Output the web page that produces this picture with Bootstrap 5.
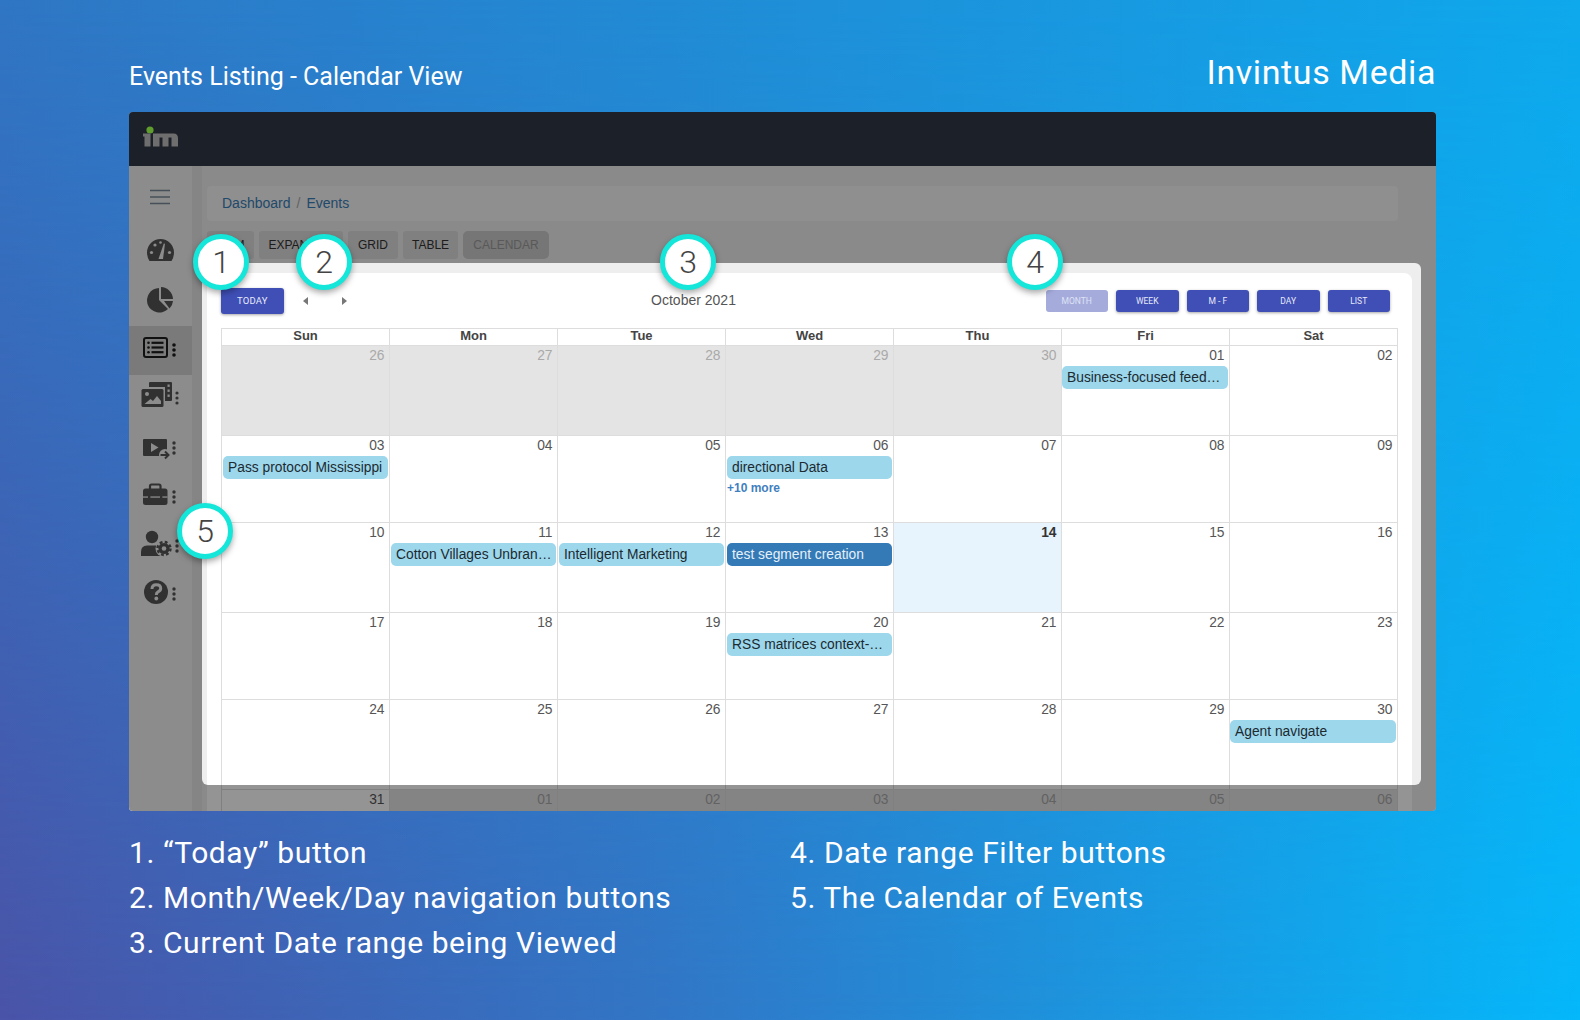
<!DOCTYPE html>
<html lang="en">
<head>
<meta charset="utf-8">
<title>Events Listing - Calendar View</title>
<link rel="stylesheet" href="https://cdn.jsdelivr.net/npm/bootstrap@5.3.0/dist/css/bootstrap.min.css">
<style>
html,body{height:100%;}
body{position:relative;width:1580px;height:1020px;overflow:hidden;background:linear-gradient(to right,#4a54a8,#3276c6 42%,#05b8fa);font-family:Roboto,sans-serif;color:#fff;}
body::before{content:"";position:absolute;inset:0;background:linear-gradient(to right,#2f76c4,#0ea8ec);-webkit-mask-image:linear-gradient(to bottom,#000,transparent);mask-image:linear-gradient(to bottom,#000,transparent);}
.page-wrap{position:relative;padding:0 144px 0 129px;}
.page-head{height:112px;padding-bottom:20px;}
.page-sub{font-size:25px;line-height:30px;}
.page-brand{font-size:34px;line-height:40px;letter-spacing:.6px;}
.app-win{position:relative;height:699px;width:1307px;overflow:hidden;border-radius:4px;background:#eee;font-family:"Liberation Sans",Arial,sans-serif;}
.app-top{position:relative;z-index:3;height:54px;background:#1c2029;padding:12px 0 0 13px;}
.app-body{height:645px;}
.side-bar{width:63px;flex:none;background:#f1f1f1;}
.side-burger{height:62px;padding:23px 0 0 21px;}
.side-item{display:block;height:49px;padding-left:12px;}
.side-item.is-on{background:#d2d2d2;}
.side-item svg,.side-burger svg,.app-top svg{display:block;}
.main-col{flex:1;min-width:0;border-left:10px solid #e6e6e6;padding:20px 24px 0 5px;}
.crumbs{height:35px;margin:0 14px 10px 0;padding:8px 15px;background:#f6f6f6;border-radius:4px;font-size:14px;line-height:19px;--bs-breadcrumb-item-padding-x:6px;}
.crumbs a{color:#3a7eb8;text-decoration:none;}
.crumbs .breadcrumb-item+.breadcrumb-item::before{color:#aaa;}
.tab-row{height:28px;margin-bottom:14px;gap:5px;}
.tab-btn{height:28px;padding:0 8px;border:0;border-radius:3px;background:#dcdcdc;color:#333;font-size:12px;line-height:28px;}
.tab-btn.is-off{background:#cbcbcb;color:#9a9a9a;border-radius:5px;}
.tab-a{width:47px;}.tab-b{width:84px;}.tab-c{width:50px;}.tab-d{width:55px;}.tab-e{width:86px;}
.cal-panel{background:#fff;border-radius:8px 8px 0 0;padding:15px 13px 0 14px;height:600px;}
.cal-tools{height:26px;margin-bottom:14px;position:relative;}
.cal-btn{font-family:Roboto,sans-serif;width:62.500px;height:22px;padding:0;border:0;border-radius:3px;background:#3f4fb6;color:#e8eaf8;font-size:8.500px;line-height:22px;box-shadow:0 1px 3px rgba(0,0,0,.35);}
.cal-btn.is-today{height:26px;line-height:26px;font-size:9.500px;letter-spacing:.2px;}
.cal-btn.is-dim{background:#a5acdc;color:#dfe2f5;box-shadow:none;}
.cal-group{gap:8px;margin-right:9px;}
.nav-arrows{gap:34px;margin-left:19px;margin-right:auto;}
.cal-title{position:absolute;left:0;right:0;top:4px;text-align:center;font-size:14px;line-height:17px;color:#555;padding-right:233px;}
.arrow-l,.arrow-r{display:block;width:0;height:0;border-top:4.500px solid transparent;border-bottom:4.500px solid transparent;}
.arrow-l{border-right:5px solid #777;}
.arrow-r{border-left:5px solid #777;}
.cal-grid{table-layout:fixed;width:1177px;border-collapse:collapse;color:#555;font-size:13.800px;}
.cal-grid th,.cal-grid td{border:1px solid #ddd;padding:0;vertical-align:top;}
.cal-grid th{height:17px;line-height:14px;text-align:center;font-size:13px;font-weight:700;color:#444;}
.cal-grid tbody tr{height:90px;}
.cal-grid tbody tr:nth-child(even){height:87px;}
.cal-num{text-align:right;padding:1px 4.500px 0 0;line-height:17px;height:20px;}
.is-other{background:#e4e4e4;}
.is-other .cal-num{color:#a9a9a9;}
.is-today-cell{background:#e8f4fd;}
.is-today-cell .cal-num{font-weight:700;color:#333;}
.cal-ev{margin:0 1px;height:23px;line-height:23px;padding:0 4px 0 5px;border-radius:5px;background:#9cd7ec;color:#1d2a30;}
.cal-ev.is-flush{margin-left:0;}
.cal-ev.is-sel{background:#337ab7;color:#e6f0f8;}
.cal-more{display:block;margin:2px 0 0 1px;font-size:12px;line-height:14px;font-weight:700;color:#3f80c0;text-decoration:none;}
.spot{position:absolute;z-index:2;left:73px;top:151px;width:1219px;height:522px;border-radius:6px;box-shadow:0 0 0 2000px rgba(0,0,0,.42);pointer-events:none;}
.callout{position:absolute;z-index:4;width:56px;height:56px;border:5px solid #14e6d9;border-radius:50%;background:#fff;color:#444;font-family:Roboto,sans-serif;font-weight:300;font-size:32px;line-height:46px;text-align:center;box-shadow:0 3px 6px rgba(0,0,0,.35);}
.c-1{left:64px;top:122px;}.c-2{left:167px;top:122px;}.c-3{left:531px;top:122px;}.c-4{left:878px;top:122px;}.c-5{left:48px;top:391px;}
.note-row{padding-top:19px;}
.note-col-a{width:661px;}
.note-list{font-size:30px;line-height:45px;letter-spacing:.58px;margin:0;}
</style>
</head>
<body>
<div class="page-wrap">
  <header class="page-head d-flex justify-content-between align-items-end">
    <div class="page-sub">Events Listing - Calendar View</div>
    <div class="page-brand">Invintus Media</div>
  </header>

  <div class="app-win">
    <div class="app-top">
      <svg width="38" height="26" viewBox="0 0 38 26" aria-label="im logo"><circle cx="8" cy="6" r="3.600" fill="#5f9e2c"/><g fill="#6e6e6e"><path d="M1 9.500h7.500v13H2.500V12.500H1z"/><path d="M11 9.500h20.500c3 0 4.500 2 4.500 4.500v8.500h-6.500V13.500h-3v9h-6v-9h-3v9H11z"/></g></svg>
    </div>
    <div class="app-body d-flex">
      <nav class="side-bar">
        <div class="side-burger"><svg width="20" height="16" viewBox="0 0 20 16"><path d="M0 1.500h20M0 8h20M0 14.500h20" stroke="#7b8b99" stroke-width="1.400"/></svg></div>
        <a class="side-item"><svg width="48" height="49" viewBox="0 0 48 49"><path fill="#555" d="M8.500 33Q6 29 6 24.500A13.500 13.500 0 0 1 33 24.500Q33 29 30.500 33Z"/><g fill="#f1f1f1"><circle cx="10.500" cy="24.500" r="1.600"/><circle cx="14" cy="17" r="1.600"/><circle cx="19.500" cy="14.500" r="1.300"/><circle cx="28.500" cy="24.500" r="1.600"/><path d="M17.500 31L22.800 15.500 24 15.800 22 31Z"/></g></svg></a>
        <a class="side-item"><svg width="48" height="49" viewBox="0 0 48 49"><g fill="#555"><path d="M18 11A12.300 12.300 0 1 0 27 32L18 23Z"/><path d="M20 10A12.500 12.500 0 0 1 32 22H20Z"/><path d="M23 24H32A12 12 0 0 1 28.500 31.500Z"/></g></svg></a>
        <a class="side-item is-on"><svg width="48" height="49" viewBox="0 0 48 49"><rect x="3" y="12" width="23" height="19" rx="2" fill="none" stroke="#1c1c1c" stroke-width="2"/><g fill="#1c1c1c"><circle cx="7.500" cy="16.800" r="1.300"/><circle cx="7.500" cy="21.500" r="1.300"/><circle cx="7.500" cy="26.200" r="1.300"/><rect x="10.500" y="15.700" width="12" height="2.200"/><rect x="10.500" y="20.400" width="12" height="2.200"/><rect x="10.500" y="25.100" width="12" height="2.200"/><circle cx="33" cy="19" r="1.800"/><circle cx="33" cy="24" r="1.800"/><circle cx="33" cy="29" r="1.800"/></g></svg></a>
        <a class="side-item"><svg width="48" height="49" viewBox="0 0 48 49"><g fill="#555"><path d="M8 8a1 1 0 0 1 1-1H30a1 1 0 0 1 1 1V25a1 1 0 0 1-1 1H24V12H8Z"/><rect x="0.500" y="14" width="22" height="18" rx="1.500"/><circle cx="36" cy="18" r="1.600"/><circle cx="36" cy="23" r="1.600"/><circle cx="36" cy="28" r="1.600"/></g><g fill="#f1f1f1"><rect x="26.500" y="9.500" width="2.200" height="2.400"/><rect x="26.500" y="14.500" width="2.200" height="2.400"/><rect x="26.500" y="19.500" width="2.200" height="2.400"/><circle cx="6" cy="19" r="2"/><path d="M3.500 29L9.500 24 12 26 16 21 20 26V29Z"/></g></svg></a>
        <a class="side-item"><svg width="48" height="49" viewBox="0 0 48 49"><g fill="#555"><rect x="2" y="15" width="24" height="17" rx="1"/><circle cx="33" cy="19" r="1.700"/><circle cx="33" cy="24" r="1.700"/><circle cx="33" cy="29" r="1.700"/></g><path fill="#f1f1f1" d="M10 19V28L17.500 23.500Z"/><circle cx="24" cy="31" r="6" fill="#f1f1f1"/><path d="M19.500 31H27M24 27.500L27.500 31 24 34.500" fill="none" stroke="#555" stroke-width="2"/></svg></a>
        <a class="side-item"><svg width="48" height="49" viewBox="0 0 48 49"><path d="M9 17V13a1.500 1.500 0 0 1 1.500-1.500h7.500a1.500 1.500 0 0 1 1.500 1.500V17" fill="none" stroke="#555" stroke-width="2.200"/><g fill="#555"><rect x="2" y="15.500" width="24.500" height="16.500" rx="2.500"/><circle cx="33" cy="19" r="1.700"/><circle cx="33" cy="24" r="1.700"/><circle cx="33" cy="29" r="1.700"/></g><rect x="2" y="23.400" width="24.500" height="1.300" fill="#f1f1f1"/><rect x="7" y="22" width="2.400" height="4" fill="#555"/><rect x="19" y="22" width="2.400" height="4" fill="#555"/></svg></a>
        <a class="side-item"><svg width="48" height="49" viewBox="0 0 48 49"><g fill="#555"><circle cx="11" cy="15" r="6.200"/><path d="M0 34V30Q0 23.500 6 23.500H15Q18 23.500 19 25V34Z"/></g><circle cx="23" cy="26.500" r="8.500" fill="#f1f1f1"/><circle cx="23" cy="26.500" r="5.600" fill="#555"/><circle cx="23" cy="26.500" r="6.500" fill="none" stroke="#555" stroke-width="2.400" stroke-dasharray="2.800 2.300"/><circle cx="23" cy="26.500" r="2.300" fill="#f1f1f1"/><g fill="#555"><circle cx="36" cy="19" r="1.700"/><circle cx="36" cy="24" r="1.700"/><circle cx="36" cy="29" r="1.700"/></g></svg></a>
        <a class="side-item"><svg width="48" height="49" viewBox="0 0 48 49"><circle cx="15" cy="21" r="12" fill="#555"/><path d="M11 18Q11 13.800 15.300 13.800Q19.700 13.800 19.700 17.500Q19.700 19.500 17 20.800Q15.300 21.600 15.300 24" fill="none" stroke="#f1f1f1" stroke-width="3"/><circle cx="15.300" cy="27.500" r="1.900" fill="#f1f1f1"/><g fill="#555"><circle cx="33" cy="18" r="1.700"/><circle cx="33" cy="23" r="1.700"/><circle cx="33" cy="28" r="1.700"/></g></svg></a>
      </nav>

      <main class="main-col">
        <ol class="breadcrumb crumbs">
          <li class="breadcrumb-item"><a href="#">Dashboard</a></li>
          <li class="breadcrumb-item"><a href="#">Events</a></li>
        </ol>
        <div class="tab-row d-flex">
          <button class="btn tab-btn tab-a" type="button">SLIM</button>
          <button class="btn tab-btn tab-b" type="button">EXPANDED</button>
          <button class="btn tab-btn tab-c" type="button">GRID</button>
          <button class="btn tab-btn tab-d" type="button">TABLE</button>
          <button class="btn tab-btn tab-e is-off" type="button">CALENDAR</button>
        </div>
        <section class="cal-panel">
          <div class="cal-tools d-flex align-items-center">
            <div class="cal-title">October 2021</div>
            <button class="btn cal-btn is-today" type="button">TODAY</button>
            <div class="nav-arrows d-flex"><span class="arrow-l"></span><span class="arrow-r"></span></div>
            <div class="cal-group d-flex">
              <button class="btn cal-btn is-dim" type="button">MONTH</button>
              <button class="btn cal-btn" type="button">WEEK</button>
              <button class="btn cal-btn" type="button">M - F</button>
              <button class="btn cal-btn" type="button">DAY</button>
              <button class="btn cal-btn" type="button">LIST</button>
            </div>
          </div>
          <table class="cal-grid">
            <thead><tr><th>Sun</th><th>Mon</th><th>Tue</th><th>Wed</th><th>Thu</th><th>Fri</th><th>Sat</th></tr></thead>
            <tbody>
              <tr>
                <td class="is-other"><div class="cal-num">26</div></td>
                <td class="is-other"><div class="cal-num">27</div></td>
                <td class="is-other"><div class="cal-num">28</div></td>
                <td class="is-other"><div class="cal-num">29</div></td>
                <td class="is-other"><div class="cal-num">30</div></td>
                <td><div class="cal-num">01</div><div class="cal-ev is-flush text-truncate">Business-focused feedback</div></td>
                <td><div class="cal-num">02</div></td>
              </tr>
              <tr>
                <td><div class="cal-num">03</div><div class="cal-ev text-truncate">Pass protocol Mississippi</div></td>
                <td><div class="cal-num">04</div></td>
                <td><div class="cal-num">05</div></td>
                <td><div class="cal-num">06</div><div class="cal-ev text-truncate">directional Data</div><a class="cal-more" href="#">+10 more</a></td>
                <td><div class="cal-num">07</div></td>
                <td><div class="cal-num">08</div></td>
                <td><div class="cal-num">09</div></td>
              </tr>
              <tr>
                <td><div class="cal-num">10</div></td>
                <td><div class="cal-num">11</div><div class="cal-ev text-truncate">Cotton Villages Unbranded</div></td>
                <td><div class="cal-num">12</div><div class="cal-ev text-truncate">Intelligent Marketing</div></td>
                <td><div class="cal-num">13</div><div class="cal-ev is-sel text-truncate">test segment creation</div></td>
                <td class="is-today-cell"><div class="cal-num">14</div></td>
                <td><div class="cal-num">15</div></td>
                <td><div class="cal-num">16</div></td>
              </tr>
              <tr>
                <td><div class="cal-num">17</div></td>
                <td><div class="cal-num">18</div></td>
                <td><div class="cal-num">19</div></td>
                <td><div class="cal-num">20</div><div class="cal-ev text-truncate">RSS matrices context-sensitive</div></td>
                <td><div class="cal-num">21</div></td>
                <td><div class="cal-num">22</div></td>
                <td><div class="cal-num">23</div></td>
              </tr>
              <tr>
                <td><div class="cal-num">24</div></td>
                <td><div class="cal-num">25</div></td>
                <td><div class="cal-num">26</div></td>
                <td><div class="cal-num">27</div></td>
                <td><div class="cal-num">28</div></td>
                <td><div class="cal-num">29</div></td>
                <td><div class="cal-num">30</div><div class="cal-ev is-flush text-truncate">Agent navigate</div></td>
              </tr>
              <tr>
                <td><div class="cal-num">31</div></td>
                <td class="is-other"><div class="cal-num">01</div></td>
                <td class="is-other"><div class="cal-num">02</div></td>
                <td class="is-other"><div class="cal-num">03</div></td>
                <td class="is-other"><div class="cal-num">04</div></td>
                <td class="is-other"><div class="cal-num">05</div></td>
                <td class="is-other"><div class="cal-num">06</div></td>
              </tr>
            </tbody>
          </table>
        </section>
      </main>
    </div>
    <div class="spot"></div>
    <div class="callout c-1">1</div>
    <div class="callout c-2">2</div>
    <div class="callout c-3">3</div>
    <div class="callout c-4">4</div>
    <div class="callout c-5">5</div>
  </div>

  <div class="note-row d-flex">
    <ul class="list-unstyled note-list note-col-a">
      <li>1. “Today” button</li>
      <li>2. Month/Week/Day navigation buttons</li>
      <li>3. Current Date range being Viewed</li>
    </ul>
    <ul class="list-unstyled note-list">
      <li>4. Date range Filter buttons</li>
      <li>5. The Calendar of Events</li>
    </ul>
  </div>
</div>
<script src="https://cdn.jsdelivr.net/npm/bootstrap@5.3.0/dist/js/bootstrap.bundle.min.js"></script>
</body>
</html>
